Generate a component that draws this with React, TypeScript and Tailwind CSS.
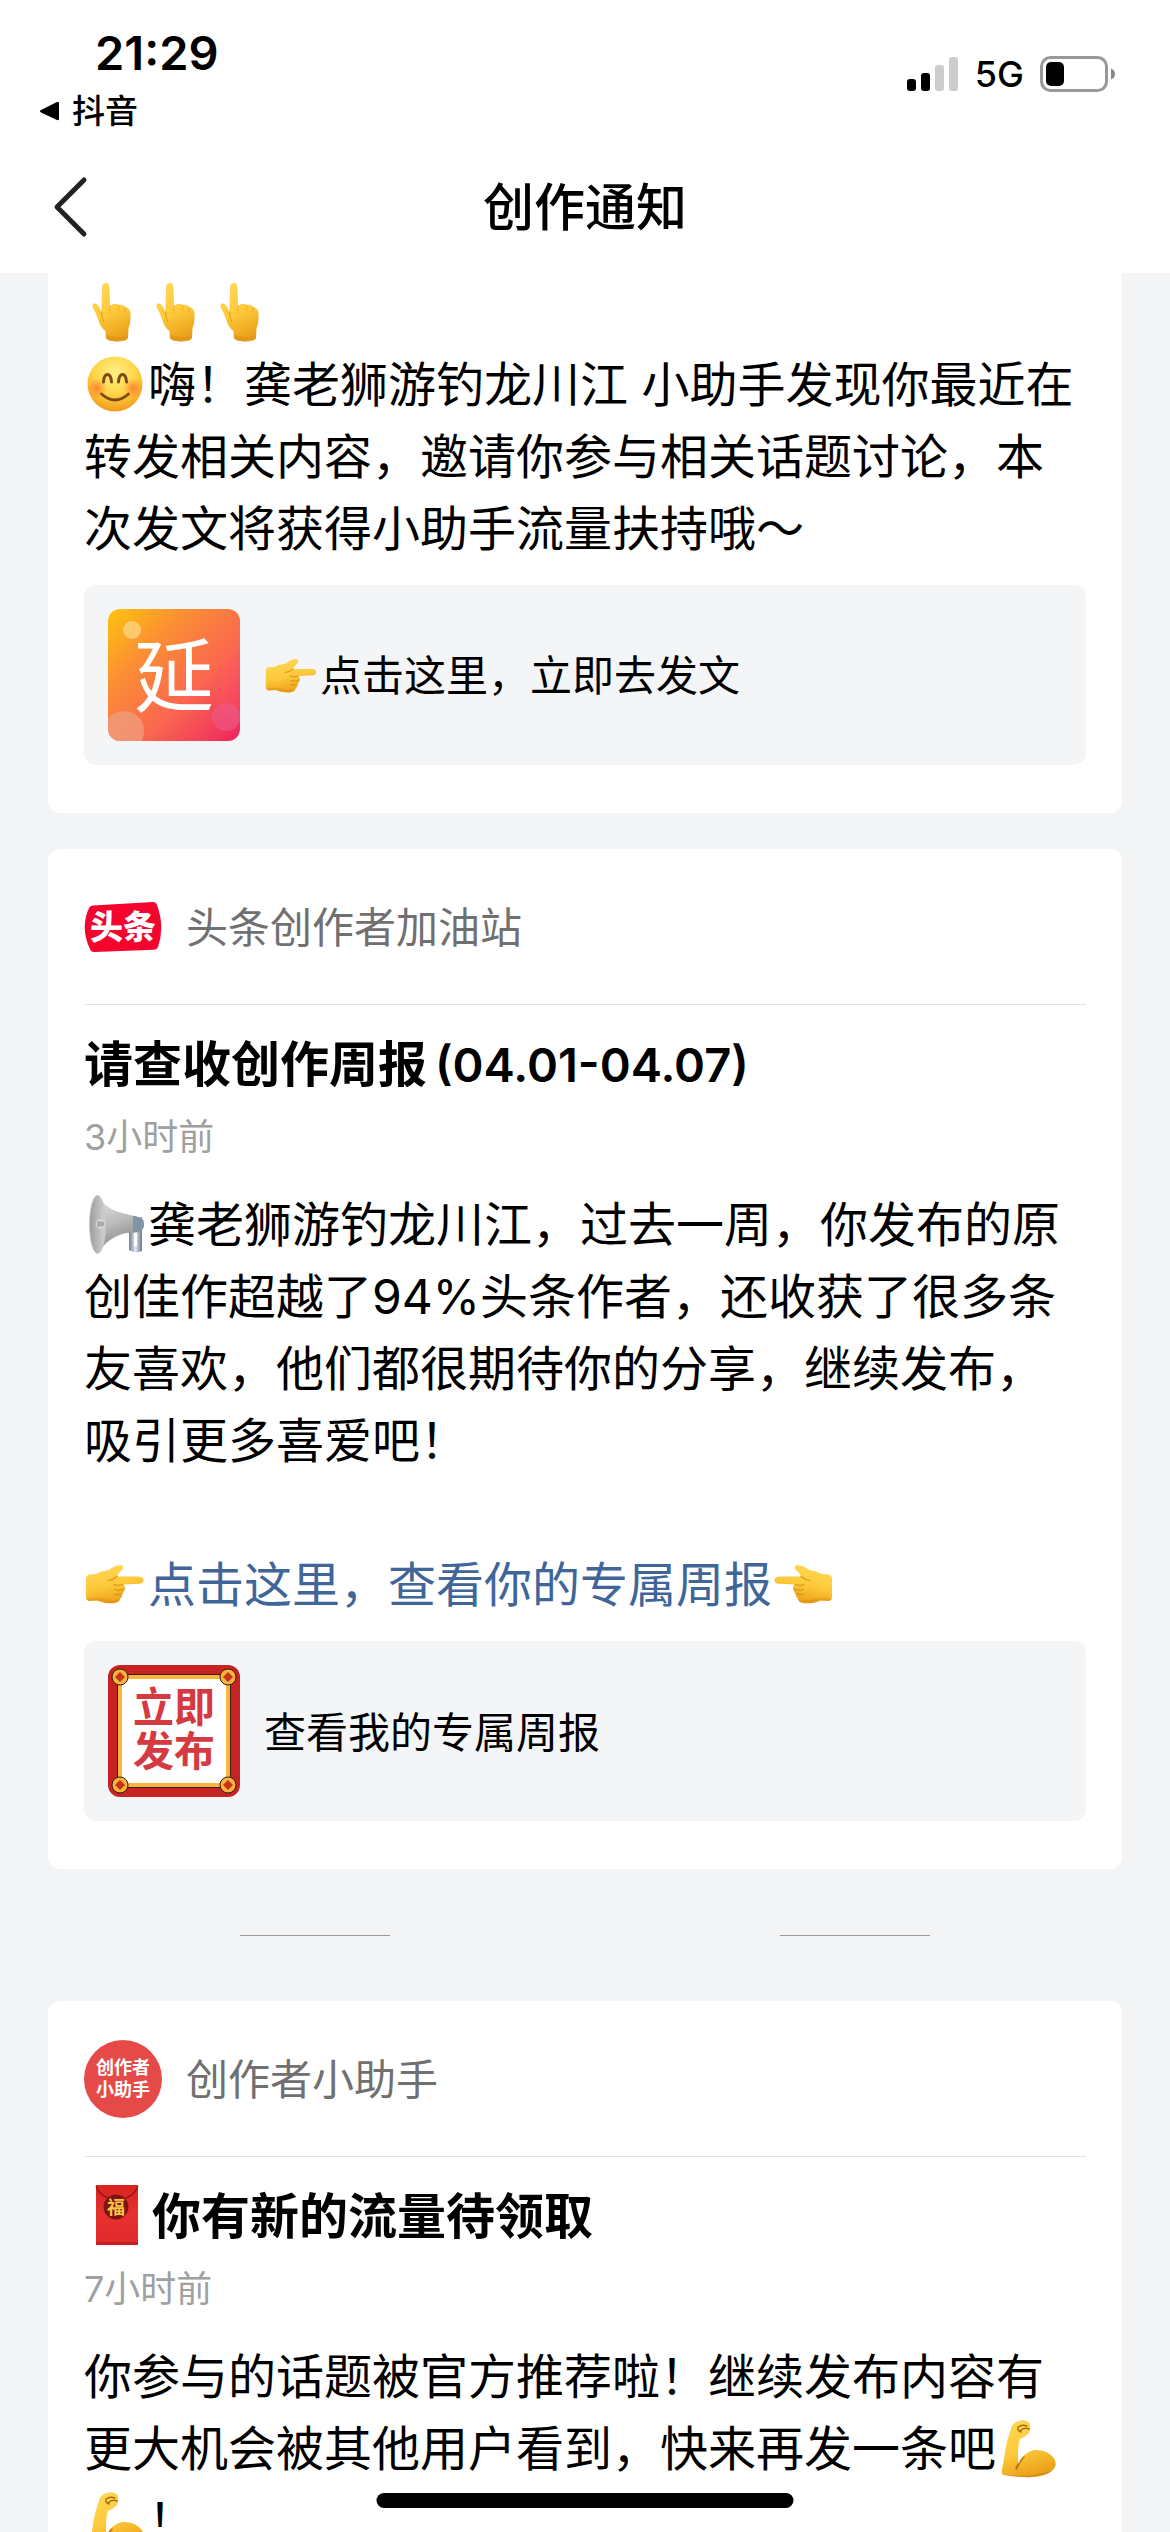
import type { ReactNode } from 'react';

/* Gradients shared by all the emoji drawings */
function EmojiDefs() {
  return (
    <svg className="absolute h-0 w-0" aria-hidden="true">
      <defs>
        <linearGradient id="skin" x1="0" y1="0" x2="0.3" y2="1">
          <stop offset="0" stopColor="#ffd95a" />
          <stop offset="0.6" stopColor="#fdc93a" />
          <stop offset="1" stopColor="#eda41c" />
        </linearGradient>
        <radialGradient id="face" cx="0.5" cy="0.3" r="0.7">
          <stop offset="0" stopColor="#fff08a" />
          <stop offset="0.55" stopColor="#ffd545" />
          <stop offset="1" stopColor="#f39a1d" />
        </radialGradient>
        <radialGradient id="blush">
          <stop offset="0" stopColor="#ff6f2c" stopOpacity="0.75" />
          <stop offset="1" stopColor="#ff6f2c" stopOpacity="0" />
        </radialGradient>
        <linearGradient id="horn" x1="0" y1="0" x2="0.3" y2="1">
          <stop offset="0" stopColor="#e4e4e4" />
          <stop offset="0.5" stopColor="#bdbdbd" />
          <stop offset="1" stopColor="#858585" />
        </linearGradient>
        <linearGradient id="hornMouth" x1="0" y1="0" x2="1" y2="0">
          <stop offset="0" stopColor="#9c9c9c" />
          <stop offset="1" stopColor="#d2d2d2" />
        </linearGradient>
        <linearGradient id="grip" x1="0" y1="0" x2="1" y2="0">
          <stop offset="0" stopColor="#6f8091" />
          <stop offset="0.5" stopColor="#dde9f5" />
          <stop offset="1" stopColor="#6b7a8a" />
        </linearGradient>
        <linearGradient id="packet" x1="0" y1="0" x2="0" y2="1">
          <stop offset="0" stopColor="#d8231f" />
          <stop offset="0.5" stopColor="#e8322f" />
          <stop offset="1" stopColor="#e0292c" />
        </linearGradient>
        <linearGradient id="poster" x1="0" y1="0" x2="1" y2="1">
          <stop offset="0" stopColor="#fdc40c" />
          <stop offset="0.3" stopColor="#fb8f35" />
          <stop offset="0.65" stopColor="#fa6450" />
          <stop offset="1" stopColor="#ee2360" />
        </linearGradient>
      </defs>
    </svg>
  );
}

function Emoji({ label, className = 'h-16 w-16', children }: { label: string; className?: string; children: ReactNode }) {
  return (
    <svg viewBox="0 0 64 64" role="img" aria-label={label} className={`inline-block shrink-0 overflow-visible align-middle ${className}`}>
      {children}
    </svg>
  );
}

function PointUp() {
  return (
    <Emoji label="👆">
      <path
        d="M18 3 Q18 -2 22 -2 Q25.500 -2 25.500 3 L26 21 Q30 17 35 20 Q39 19 41 22 Q46 23 46.500 29 Q47 38 44.500 43 L44 53 Q43 56 33 56.500 Q23 56 22 53 L21.500 46 Q16 42 14 34 Q12 28 8.500 22 Q8 18 11.500 18.500 Q15 20 17.500 27 Z"
        fill="url(#skin)"
      />
      <path d="M17.500 27 Q18 34 20 37" fill="none" stroke="#d98f12" strokeWidth="1.200" strokeLinecap="round" opacity="0.7" />
      <path d="M26 21 Q25 25 26.500 28 M35 20 Q34 23 35 26 M41 22 Q40 25 41 27" fill="none" stroke="#d98f12" strokeWidth="1.200" strokeLinecap="round" opacity="0.35" />
      <path d="M22 50 Q32 54 44 50 L44 53 Q43 56 33 56.500 Q23 56 22 53 Z" fill="#d9860f" opacity="0.45" />
    </Emoji>
  );
}

function HandShape() {
  return (
    <>
      <path
        d="M2 23 Q1.500 19 5 17.500 L12 17 Q17 14 25 13 Q30 8.500 37 8 Q41 9 38 13 Q34 16 33 19.500 L55 19.500 Q59.500 20 59.500 23 Q59.500 26.500 55 26.700 L39 27.500 Q42 29 40.500 32 Q41 35 38 36.500 Q39 40 36 41.500 Q36 45 31 46 Q21 47 13 43.500 L5 44 Q2 43 2 40 Z"
        fill="url(#skin)"
      />
      <path d="M39 27.500 Q33 29 30 27.500 M40.500 32 Q34 34 31 32.500 M38 36.500 Q33 38.500 30 37 M33 19.500 Q29 23 24 23.500" fill="none" stroke="#cd8310" strokeWidth="1.200" strokeLinecap="round" opacity="0.75" />
      <path d="M5 44 L13 43.500 Q21 47 31 46 Q35 45 36 42 Q27 44.500 17 41 Q9 40 2 42 Z" fill="#d9860f" opacity="0.4" />
    </>
  );
}

function PointRight({ className }: { className?: string }) {
  return (
    <Emoji label="👉" className={className}>
      <HandShape />
    </Emoji>
  );
}

function PointLeft() {
  return (
    <Emoji label="👈">
      <g transform="matrix(-1 0 0 1 62 0)">
        <HandShape />
      </g>
    </Emoji>
  );
}

function Smile() {
  return (
    <Emoji label="😊">
      <circle cx="31" cy="27" r="27.500" fill="url(#face)" />
      <circle cx="13" cy="31" r="10" fill="url(#blush)" />
      <circle cx="49" cy="31" r="10" fill="url(#blush)" />
      <path d="M19.500 25 Q20 17.500 23.500 17.500 Q27 17.500 27.500 25 M34.500 25 Q35 17.500 38.500 17.500 Q42 17.500 42.500 25" fill="none" stroke="#7c4a12" strokeWidth="3" strokeLinecap="round" />
      <path d="M17.500 37 Q31 49 44.500 37" fill="none" stroke="#7c4a12" strokeWidth="2.800" strokeLinecap="round" />
    </Emoji>
  );
}

function Megaphone() {
  return (
    <Emoji label="📢">
      <path d="M45 24 L58 20 L58 54 Q52 57 45 53 Z M50 30 L50 49 L53 49 L53 30 Z" fill="url(#grip)" fillRule="evenodd" />
      <path d="M14 -1 Q22 13 42 17 L54 20 Q60 21 60 27 Q60 33 55 35 L42 36 Q24 40 14 56 Z" fill="url(#horn)" />
      <path d="M49 18.500 L54 20 Q60 21 60 27 Q60 33 55 35 L49 35.500 Z" fill="#8193a5" />
      <ellipse cx="13.500" cy="27.500" rx="8" ry="29" fill="url(#hornMouth)" stroke="#c9c9c9" strokeWidth="1" />
      <ellipse cx="16" cy="27" rx="4.500" ry="5" fill="#d7d7d7" />
      <path d="M13 24 L20 25 L20 29 L13 30 Z" fill="#8e8e8e" opacity="0.6" />
    </Emoji>
  );
}

function Muscle() {
  return (
    <Emoji label="💪">
      <path
        d="M15 8 Q15 4 20 1 Q26 -2 31 0 Q35 2 34 6 Q35 10 32 13 Q28 17 24 18 Q21 26 22.500 43 Q26 32 38 29 Q50 28 57 36 Q62 42 58 48 Q50 56 32 56 Q18 56 7.500 54 Q5 53 6 48 Q8 40 9 31 Q11 18 15 8 Z"
        fill="url(#skin)"
      />
      <path d="M22.500 43 Q19 47 20.500 48 Q24 40 28 36" fill="none" stroke="#b9780e" strokeWidth="1.500" strokeLinecap="round" />
      <path d="M22 6 Q26 3 31 5 M24 10 Q28 6 33 8 M22 6 Q21 10 25 11" fill="none" stroke="#a9690c" strokeWidth="1.400" strokeLinecap="round" />
      <path d="M7 53 Q30 58 57 49 Q50 56 32 56.500 Q18 56 7 53 Z" fill="#c87b0d" opacity="0.6" />
    </Emoji>
  );
}

function RedPacket() {
  return (
    <Emoji label="🧧">
      <rect x="12" y="0" width="42" height="60" rx="1" fill="url(#packet)" />
      <path d="M12 1 Q16 13 33 15 Q50 13 54 1" fill="none" stroke="#8f1414" strokeWidth="1.200" />
      <circle cx="32" cy="22" r="12.500" fill="#7e1414" />
      <text x="32" y="29" textAnchor="middle" fontSize="18" fontWeight="700" fill="#f6c544" fontFamily="'Noto Sans CJK SC', sans-serif">福</text>
      <rect x="12" y="57" width="42" height="3" fill="#a81818" opacity="0.5" />
    </Emoji>
  );
}

/* Avatars and thumbnails */
function ToutiaoLogo() {
  return (
    <svg viewBox="0 0 78 78" className="size-[78px] shrink-0" aria-hidden="true">
      <path d="M9 17.500 L69 14 Q72 14 73 17 Q81 39 74 59 Q73 61.500 70 61.700 L10 64 Q7 64 6 61 Q-4 40 5 20 Q6 17.700 9 17.500 Z" fill="#f5042e" />
      <text x="39" y="51" textAnchor="middle" fontSize="33" fontWeight="900" fill="#fff" fontFamily="'Noto Sans CJK SC', sans-serif">头条</text>
    </svg>
  );
}

function AssistantLogo() {
  return (
    <span className="flex size-[78px] shrink-0 flex-col items-center justify-center rounded-full bg-[#e64a48] text-[18px] leading-[22px] font-bold text-white" aria-hidden="true">
      <span>创作者</span>
      <span>小助手</span>
    </span>
  );
}

function TopicThumb() {
  return (
    <svg viewBox="0 0 132 132" className="size-[132px] shrink-0 rounded-xl" aria-hidden="true">
      <rect width="132" height="132" fill="url(#poster)" />
      <circle cx="144" cy="80" r="36" fill="#ff5a70" opacity="0.25" />
      <circle cx="24" cy="21" r="9" fill="#ffd98a" opacity="0.7" />
      <circle cx="16" cy="122" r="20" fill="#f0a184" opacity="0.7" />
      <circle cx="118" cy="108" r="14" fill="#ec5a8a" opacity="0.6" />
      <text x="66" y="96" textAnchor="middle" fontSize="80" fill="#fff" fontFamily="'Noto Sans CJK SC', sans-serif">延</text>
    </svg>
  );
}

const corners = [[12, 12], [120, 12], [12, 120], [120, 120]];

function ReportThumb() {
  return (
    <span className="grid size-[132px] shrink-0 place-items-center overflow-hidden rounded-xl" aria-hidden="true">
      <svg viewBox="0 0 132 132" className="col-start-1 row-start-1 size-full">
        <rect width="132" height="132" fill="#c62322" />
        <rect x="12" y="12" width="108" height="108" fill="#fff" stroke="#3a1c10" strokeWidth="6" />
        <rect x="12" y="12" width="108" height="108" fill="#fff" stroke="#f9b43c" strokeWidth="4" />
        {corners.map(([x, y]) => (
          <g key={`${x}-${y}`}>
            <circle cx={x} cy={y} r="8" fill="#f9b43c" stroke="#3a1c10" strokeWidth="1" />
            <path d={`M${x} ${y - 5} l5 5 l-5 5 l-5 -5 Z`} fill="#c8321c" />
          </g>
        ))}
      </svg>
      <span className="col-start-1 row-start-1 flex flex-col pb-1 text-[41px] leading-[44px] font-bold text-[#d43a3f]">
        <span>立即</span>
        <span>发布</span>
      </span>
    </span>
  );
}

function StatusBar() {
  return (
    <div className="flex items-start justify-between pt-6 pr-[54px] pl-[39px]">
      <div>
        <div className="pl-14 text-[47px] leading-[58px] font-semibold">21:29</div>
        <button type="button" className="flex items-center gap-3 text-[33px] leading-[58px] font-medium">
          <svg viewBox="0 0 21 20" className="h-5 w-[21px]" aria-hidden="true">
            <path d="M2 9 L18 1 Q20 0.500 20 2 L20 18 Q20 19.500 18 19 L2 11.500 Q0 10 2 9 Z" />
          </svg>
          抖音
        </button>
      </div>
      <div className="flex items-center pt-8">
        <svg viewBox="0 0 52 36" className="h-9 w-[52px]" aria-hidden="true">
          <rect x="0" y="23" width="9" height="12" rx="3" />
          <rect x="14" y="17" width="9" height="18" rx="3" />
          <rect x="28" y="9" width="9" height="26" rx="3" fill="#ccc" />
          <rect x="42" y="1" width="9" height="34" rx="3" fill="#ccc" />
        </svg>
        <span className="px-4 text-[36px] leading-9 font-medium">5G</span>
        <svg viewBox="0 0 76 36" className="h-9 w-[76px]" aria-hidden="true">
          <rect x="1.500" y="1.500" width="65" height="33" rx="9" fill="none" stroke="#999" strokeWidth="3" />
          <rect x="6" y="6" width="18" height="24" rx="5" />
          <path d="M71 12.500 Q75 14 75 18 Q75 22 71 23.500 Z" fill="#888" />
        </svg>
      </div>
    </div>
  );
}

function NavBar() {
  return (
    <div className="grid h-[133px] grid-cols-[1fr_auto_1fr] items-center px-[51px]">
      <button type="button" aria-label="返回" className="justify-self-start">
        <svg viewBox="0 0 38 62" className="h-[62px] w-[38px]" fill="none" stroke="#222" strokeWidth="5" strokeLinecap="round" strokeLinejoin="round">
          <path d="M33 4 L6 31 L33 58" />
        </svg>
      </button>
      <h1 className="pt-0.5 text-[51px] leading-[72px] font-medium">创作通知</h1>
    </div>
  );
}

function CardHeader({ avatar, name }: { avatar: ReactNode; name: string }) {
  return (
    <div className="flex h-[156px] items-center gap-6 border-b border-[#e4e4e4] text-[42px] leading-[60px] text-[#707070]">
      {avatar}
      <span className="pt-0.5">{name}</span>
    </div>
  );
}

function LinkBox({ thumb, children }: { thumb: ReactNode; children: ReactNode }) {
  return (
    <a href="#" className="mt-5 flex items-center gap-6 rounded-xl bg-[#f3f5f7] p-6 text-[42px] leading-[60px]">
      {thumb}
      <span className="pt-1">{children}</span>
    </a>
  );
}

export default function App() {
  return (
    <div className="relative flex h-screen flex-col overflow-hidden bg-[#f3f4f6] font-[Inter,'Noto_Sans_CJK_SC',sans-serif] text-black" lang="zh-CN">
      <EmojiDefs />

      <header className="shrink-0 bg-white">
        <StatusBar />
        <NavBar />
      </header>

      <main className="min-h-0 flex-1 overflow-hidden px-12">
        {/* Topic invitation, scrolled part way under the header */}
        <article className="rounded-b-xl bg-white px-9 pt-1 pb-12">
          <div className="text-[48px] leading-[72px]">
            <p><PointUp /><PointUp /><PointUp /></p>
            <p><Smile />嗨！龚老狮游钓龙川江 小助手发现你最近在转发相关内容，邀请你参与相关话题讨论，本次发文将获得小助手流量扶持哦～</p>
          </div>
          <LinkBox thumb={<TopicThumb />}>
            <PointRight className="size-14" />点击这里，立即去发文
          </LinkBox>
        </article>

        {/* Weekly report */}
        <article className="mt-9 rounded-xl bg-white px-9 pb-12">
          <CardHeader avatar={<ToutiaoLogo />} name="头条创作者加油站" />
          <h2 className="pt-6 text-[49px] leading-[72px] font-semibold">
            请查收创作周报<span className="ml-2 text-[47px]">(04.01-04.07)</span>
          </h2>
          <time className="mt-2 block text-[36px] leading-[56px] text-[#a0a0a0]">3小时前</time>
          <div className="mt-6 text-[48px] leading-[72px]">
            <p><Megaphone />龚老狮游钓龙川江，过去一周，你发布的原创佳作超越了94%头条作者，还收获了很多条友喜欢，他们都很期待你的分享，继续发布，吸引更多喜爱吧！</p>
            <p className="mt-[72px]">
              <PointRight /><a href="#" className="text-[#406599]">点击这里，查看你的专属周报</a><PointLeft />
            </p>
          </div>
          <LinkBox thumb={<ReportThumb />}>查看我的专属周报</LinkBox>
        </article>

        {/* Divider between new and earlier notices */}
        <div className="flex h-[132px] items-center justify-center gap-[390px]" role="separator">
          <span className="h-px w-[150px] bg-[#999]" />
          <span className="h-px w-[150px] bg-[#999]" />
        </div>

        {/* Traffic reward */}
        <article className="rounded-xl bg-white px-9 pb-12">
          <CardHeader avatar={<AssistantLogo />} name="创作者小助手" />
          <h2 className="flex items-center gap-1 pt-6 text-[49px] leading-[72px] font-semibold">
            <RedPacket />你有新的流量待领取
          </h2>
          <time className="mt-2 block text-[36px] leading-[56px] text-[#a0a0a0]">7小时前</time>
          <p className="mt-6 text-[48px] leading-[72px]">
            你参与的话题被官方推荐啦！继续发布内容有更大机会被其他用户看到，快来再发一条吧<Muscle /><Muscle />！
          </p>
        </article>
      </main>

      {/* Home indicator */}
      <div className="absolute bottom-6 left-1/2 h-[15px] w-[417px] -translate-x-1/2 rounded-full bg-black" />
    </div>
  );
}
